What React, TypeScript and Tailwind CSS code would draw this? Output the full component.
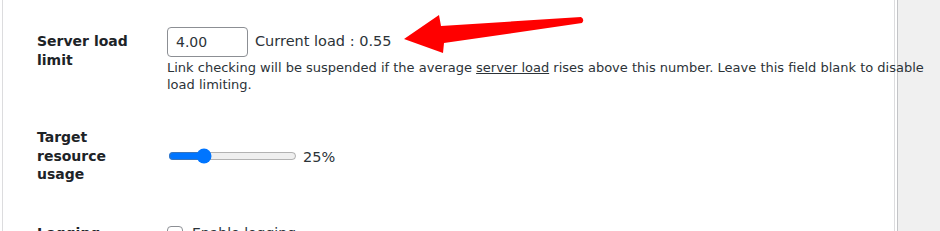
import React from 'react';

const font = "font-['DejaVu_Sans','Verdana',sans-serif]";

const SettingRow: React.FC<{ label: React.ReactNode; children: React.ReactNode }> = ({ label, children }) => (
  <div className="flex pl-[34px]">
    <div className="w-[130px] shrink-0 pt-[20px] pb-[20px] pr-[24px] text-[14px] font-bold leading-[18.7px] text-[#1d2327]">
      {label}
    </div>
    <div className="pt-[15px] pb-[15px]">{children}</div>
  </div>
);

const App: React.FC = () => {
  return (
    <div className={`relative flex h-[231px] w-[940px] overflow-hidden bg-white ${font}`}>
      {/* settings panel */}
      <div className="relative z-10 ml-[2px] w-[893px] shrink-0 border-l border-r border-[#dcdcde] bg-white pt-[12px]">
        <SettingRow label={<>Server load<br />limit</>}>
          <div className="flex items-center">
            <input
              type="text"
              defaultValue="4.00"
              className={`h-[30px] w-[81px] rounded-[4px] border border-[#8c8f94] bg-white px-[8px] text-[14px] text-[#2c3338] outline-none ${font}`}
            />
            <span className="ml-[7px] text-[14.5px] text-[#2c3338]">Current load : 0.55</span>
          </div>
          <p className="mt-[2px] w-[765px] text-[13px] leading-[17px] text-[#2c3338]">
            Link checking will be suspended if the average{' '}
            <a href="#" className="text-[#2c3338] underline">server load</a> rises above this number. Leave this
            field blank to disable load limiting.
          </p>
        </SettingRow>

        <SettingRow label={<>Target<br />resource<br />usage</>}>
          <div className="mt-[20px] flex items-center">
            <input type="range" defaultValue={25} min={0} max={100} className="m-0 ml-[1px] w-[129px] accent-[#0075ff]" />
            <span className="ml-[6px] mt-[4px] text-[14.5px] text-[#2c3338]">25%</span>
          </div>
        </SettingRow>

        <SettingRow label="Logging">
          <label className="mt-[4px] flex items-center text-[14px] text-[#2c3338]">
            <input
              type="checkbox"
              className="m-0 h-[16px] w-[16px] appearance-none rounded-[4px] border border-[#8c8f94] bg-white"
            />
            <span className="ml-[9px]">Enable logging</span>
          </label>
        </SettingRow>
      </div>

      {/* right side */}
      <div className="ml-[2px] flex-1 border-l border-[#c3c4c7] bg-[#f0f0f0]" />

      {/* annotation arrow */}
      <svg className="pointer-events-none absolute left-0 top-0 z-20" width="940" height="231" viewBox="0 0 940 231">
        <path
          d="M404 39 L439 15 L441 26 L581 17 Q585 19.5 582 23 L444 43 L443 53 Z"
          fill="#ff0000"
        />
      </svg>
    </div>
  );
};

export default App;
